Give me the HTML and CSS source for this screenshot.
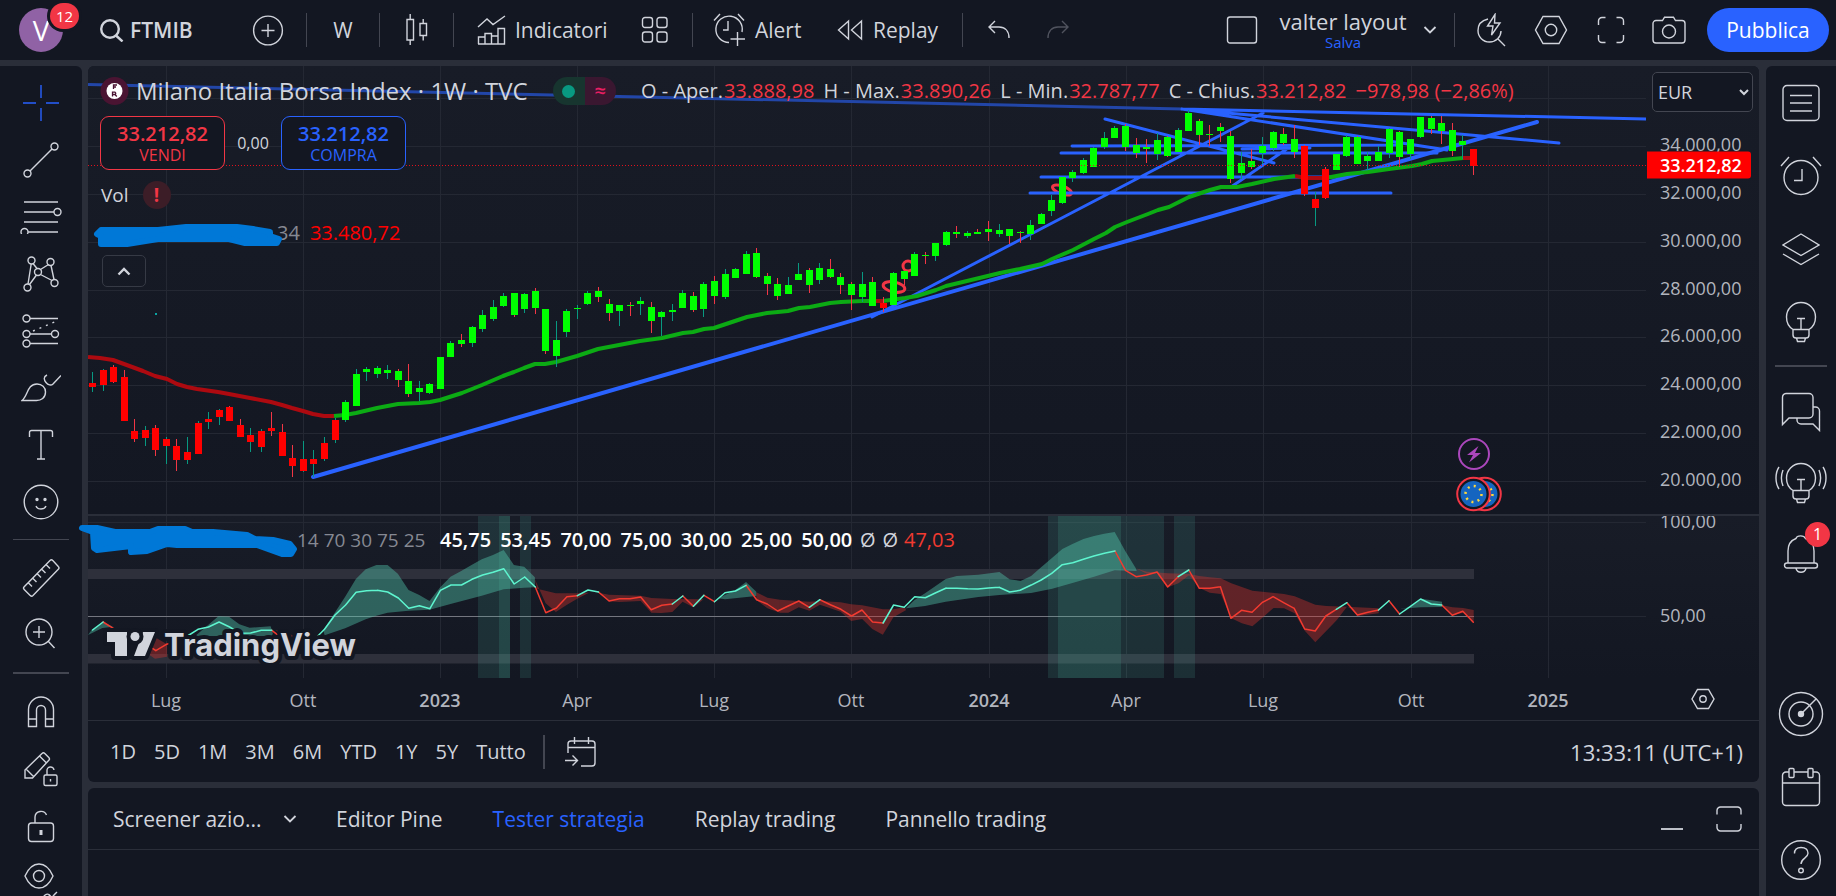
FILE: index.html
```html
<!DOCTYPE html>
<html lang="it">
<head>
<meta charset="utf-8">
<meta name="viewport" content="width=device-width, initial-scale=1">
<title>FTMIB 33.212,82 — valter layout</title>
<link rel="stylesheet" href="styles.css">
</head>
<body>
<header class="topbar">
  <button class="avatar-btn" aria-label="Menu utente"><span class="avatar">V</span><span class="badge badge-user">12</span></button>
  <button class="symbol-btn"><svg width="24" height="24" viewBox="0 0 24 24" class="ic heavy"><circle cx="10" cy="11" r="8.800"/><path d="M16 17.500l6.500 6"/></svg><b>FTMIB</b></button>
  <button class="tb plus-btn" aria-label="Confronta"><svg width="32" height="32" viewBox="0 0 32 32" class="ic"><circle cx="16" cy="16.500" r="14.400"/><path d="M16 10v13M9.500 16.500h13"/></svg></button>
  <i class="vsep"></i>
  <button class="tb w-btn">W</button>
  <i class="vsep"></i>
  <button class="tb candle-btn" aria-label="Candele"><svg width="24" height="32" viewBox="0 0 24 32" class="ic"><path d="M2 5.500h6.500v20.500H2zM5.200 0v5.500M5.200 26v5M15 9.500h6.500v12H15zM18.200 5v4.500M18.200 21.500v5"/></svg></button>
  <i class="vsep"></i>
  <button class="tb ind-btn"><svg width="29" height="30" viewBox="0 0 29 30" class="ic"><path d="M1 12l9-8 6 5.500L28 1M1.500 29v-7h6.500v7M8 29V18.500h6.500V29M14.500 29v-8h6.500v8M21 29V13.500h6.500V29zM1 29h27"/></svg>Indicatori</button>
  <button class="tb grid-btn" aria-label="Modelli"><svg width="28" height="28" viewBox="0 0 28 28" class="ic"><rect x="1.500" y="1.500" width="10" height="10" rx="2.500"/><rect x="16" y="1.500" width="10" height="10" rx="2.500"/><rect x="1.500" y="16" width="10" height="10" rx="2.500"/><rect x="16" y="16" width="10" height="10" rx="2.500"/></svg></button>
  <i class="vsep"></i>
  <button class="tb alert-btn"><svg width="32" height="34" viewBox="0 0 32 34" class="ic"><path d="M1 7.500L7 1M25 1l6 6.500M15 8v9h-5M16 29.500A13.200 13.200 0 1 1 29 19M24.500 19v14M17.500 26H32"/></svg>Alert</button>
  <button class="tb replay-btn"><svg width="26" height="22" viewBox="0 0 26 22" class="ic"><path d="M11.500 2v18L1.500 11zM24.500 2v18l-10-9z"/></svg>Replay</button>
  <i class="vsep"></i>
  <button class="tb undo-btn" aria-label="Annulla"><svg width="24" height="20" viewBox="0 0 24 20" class="ic"><path d="M8 1L2 7l6 6M2 7h10c6 0 10 4 10 11"/></svg></button>
  <button class="tb redo-btn" aria-label="Ripeti"><svg width="24" height="20" viewBox="0 0 24 20" class="ic"><path d="M16 1l6 6-6 6M22 7H12C6 7 2 11 2 18"/></svg></button>
  <span class="spacer"></span>
  <button class="tb square-btn" aria-label="Configura layout"><svg width="32" height="30" viewBox="0 0 32 30" class="ic"><rect x="1.500" y="2" width="29" height="26" rx="2.500"/></svg></button>
  <button class="layout-btn"><span>valter layout</span><small>Salva</small></button>
  <button class="tb chev-btn" aria-label="Gestisci layout"><svg width="14" height="8" viewBox="0 0 14 8" class="ic thick"><path d="M1.500 1L7 6.500 12.500 1"/></svg></button>
  <i class="vsep"></i>
  <button class="tb quick-btn" aria-label="Ricerca rapida"><svg width="30" height="34" viewBox="0 0 30 34" class="ic"><path d="M12 6C5.500 7.500 2 12 2 17.500 2 24 7 29 13.500 29S25 24 25 18M22 26l7 7M19 1.500L11.500 13H17l-1.500 9L24 10h-5.500z"/></svg></button>
  <button class="tb set-btn" aria-label="Impostazioni"><svg width="34" height="30" viewBox="0 0 34 30" class="ic"><path d="M9 1.500h16L32.500 15 25 28.500H9L1.500 15z"/><circle cx="17" cy="15" r="5.700"/></svg></button>
  <button class="tb full-btn" aria-label="Schermo intero"><svg width="28" height="28" viewBox="0 0 28 28" class="ic"><path d="M1.500 9V5a3.500 3.500 0 0 1 3.500-3.500h3.500M19.500 1.500H23A3.500 3.500 0 0 1 26.500 5v4M26.500 19v4a3.500 3.500 0 0 1-3.500 3.500h-3.500M8.500 26.500H5A3.500 3.500 0 0 1 1.500 23v-4"/></svg></button>
  <button class="tb cam-btn" aria-label="Istantanea"><svg width="34" height="28" viewBox="0 0 34 28" class="ic"><path d="M4 4.500h6.500l2-3.300h9l2 3.300H30a3 3 0 0 1 3 3V24a3 3 0 0 1-3 3H4a3 3 0 0 1-3-3V7.500a3 3 0 0 1 3-3z"/><circle cx="17" cy="15.500" r="6.500"/></svg></button>
  <button class="publish">Pubblica</button>
</header>

<main class="workspace">
  <nav class="left-tools" aria-label="Strumenti di disegno">
    <button class="lt active" aria-label="Croce"><svg width="38" height="38" viewBox="0 0 38 38" class="ic"><path d="M19 1v13M19 24v13M1 19h13M24 19h13"/></svg></button>
    <button class="lt" aria-label="Linea di tendenza"><svg width="36" height="36" viewBox="0 0 36 36" class="ic"><circle cx="4.500" cy="31.500" r="3.500"/><circle cx="31.500" cy="4.500" r="3.500"/><path d="M7 29L29 7"/></svg></button>
    <button class="lt" aria-label="Fibonacci"><svg width="42" height="34" viewBox="0 0 42 34" class="ic"><path d="M4 2h34M4 12h30M4 22h34M8 32h30"/><circle cx="37.500" cy="12" r="3.500"/><circle cx="4.500" cy="32" r="3.500"/></svg></button>
    <button class="lt" aria-label="Pattern XABCD"><svg width="36" height="36" viewBox="0 0 36 36" class="ic"><circle cx="8.500" cy="4.500" r="3.500"/><circle cx="27.500" cy="6" r="3.500"/><circle cx="15" cy="16" r="3.500"/><circle cx="4.500" cy="31.500" r="3.500"/><circle cx="31.500" cy="27" r="3.500"/><path d="M8.200 8L5 28M10 7.500l4 5M6.500 28.500l7-9.500M17.500 13.500l8-5M28 9.500l3 14M17.500 18.500l11.500 6"/></svg></button>
    <button class="lt" aria-label="Previsione"><svg width="38" height="34" viewBox="0 0 38 34" class="ic"><circle cx="4.500" cy="4.500" r="3.500"/><circle cx="4.500" cy="20" r="3.500"/><circle cx="33" cy="20" r="3.500"/><circle cx="4.500" cy="29.500" r="3.500"/><path d="M8 4.500h28M8 20h21.500M8 29.500h28"/><path d="M11 17L35 7" stroke-dasharray="2 5"/></svg></button>
    <button class="lt" aria-label="Pennello"><svg width="40" height="28" viewBox="0 0 40 28" class="ic"><path d="M1 26.500C7 22 6 10 16 10c5 0 8.500 3.500 8.500 8 0 6-4.500 8.500-9 8.500zM26 1c-4 2-3 5-1 7.500s5 3.500 7 1.500l8-8.500"/></svg></button>
    <button class="lt" aria-label="Testo"><svg width="26" height="32" viewBox="0 0 26 32" class="ic"><path d="M1.500 8V3.500a2 2 0 0 1 2-2h19a2 2 0 0 1 2 2V8M13 1.500V30M9 30h8"/></svg></button>
    <button class="lt" aria-label="Emoji"><svg width="36" height="36" viewBox="0 0 36 36" class="ic"><circle cx="18" cy="18" r="16.800"/><path d="M13 22c1.500 4 8.500 4 10 0"/><circle cx="14" cy="15.500" r="1" class="dot"/><circle cx="22" cy="15.500" r="1" class="dot"/></svg></button>
    <i class="hsep"></i>
    <button class="lt mid" aria-label="Misura"><svg width="38" height="40" viewBox="0 0 38 40" class="ic"><path d="M28 2.500a2 2 0 0 1 2.800 0l5.500 6a2 2 0 0 1 0 2.800L11 37.500a2 2 0 0 1-2.800 0l-6-6a2 2 0 0 1 0-2.800zM24 6.500l4 4M19.500 11l4 4M15 15.500l4 4M10.500 20l4 4M6 24.500l4 4"/></svg></button>
    <button class="lt mid" aria-label="Zoom"><svg width="32" height="32" viewBox="0 0 32 32" class="ic"><circle cx="14" cy="15" r="13"/><path d="M23 24l6.500 7M14 9v12M8 15h12"/></svg></button>
    <i class="hsep wide"></i>
    <button class="lt" aria-label="Calamita"><svg width="28" height="32" viewBox="0 0 28 32" class="ic"><path d="M1.500 30.500V13.500a12.500 12.500 0 0 1 25 0v17h-8V14a4.500 4.500 0 0 0-9 0v16.500zM1.500 23h8M18.500 23h8"/></svg></button>
    <button class="lt" aria-label="Resta in modalità disegno"><svg width="36" height="36" viewBox="0 0 36 36" class="ic"><path d="M2 27v-8L19 2.500a2 2 0 0 1 2.800 0l4 4a2 2 0 0 1 0 2.800L9.500 27zM3 18l8 8M16.500 5l7 7"/><rect x="21" y="24" width="13" height="10.500" rx="1.500"/><path d="M24 24v-4a3.500 3.500 0 0 1 7-1M27.500 28v2.500"/></svg></button>
    <button class="lt" aria-label="Blocca disegni"><svg width="28" height="34" viewBox="0 0 28 34" class="ic"><rect x="1.500" y="14" width="25" height="18.500" rx="3"/><path d="M8 14V8a6 6 0 0 1 11.500-2"/><path d="M14 21v5" stroke-width="3"/></svg></button>
    <button class="lt" aria-label="Nascondi disegni"><svg width="36" height="42" viewBox="0 0 36 42" class="ic"><path d="M2 14C6 5 11 2 16 2s10 3 14 12c-4 9-9 12-14 12S6 23 2 14z"/><circle cx="16" cy="14" r="5.500"/><path d="M20 38c0-6 6-8 8-3M26 33c1 3 4 2 5 0l3-3"/></svg></button>
  </nav>

  <div class="center">
    <section class="chart-card" aria-label="Grafico FTMIB">
      <div class="chart">
        <div class="plot">
          <svg id="plot" class="plot-svg" viewBox="88 66 1558 612" preserveAspectRatio="none" aria-hidden="true">
            <defs>
              <linearGradient id="bg" x1="0" y1="0" x2="0" y2="1"><stop offset="0" stop-color="#181c27"/><stop offset="1" stop-color="#131722"/></linearGradient>
            </defs>
            <rect x="88" y="66" width="1558" height="449" fill="url(#bg)"/>
            <rect x="88" y="515" width="1558" height="163" fill="url(#bg)"/>
            <g id="grid"></g>
            <g class="marks">
              <ellipse cx="894" cy="287" rx="11" ry="5" transform="rotate(12 894 287)"/>
              <ellipse cx="908" cy="266" rx="5" ry="5"/>
              <ellipse cx="1062" cy="190" rx="10" ry="4" transform="rotate(20 1062 190)"/>
            </g>
            <g class="trend">
              <path class="dim" d="M88 84.500L1182 109"/>
              <path d="M1182 109L1646 119M872 317L1263 113M1105 119L1274 163M1182 109L1559 143M1182 109L1447 150M1072 146L1400 145M1061 153H1437M1041 177H1338M1030 193H1391M1242 149L1310 148M1231 187L1291 146"/>
              <path class="main" d="M313 477L1537 122"/>
            </g>
            <g class="ma">
              <path class="dn" d="M88 357L100 358 113 360 124 364 143 371 155 376 167 379 177 384 187 387 197 389 218 392 229 394 250 398 271 402 282 405 292 408 303 411 313 414 324 416 334 416M872 301H883M1295 176L1306 178H1326M1463 158H1474"/>
              <path class="up" d="M334 416L345 415 356 413 377 408 398 404 419 403 430 402 440 400 462 393 482 385 503 376 514 372 524 368 535 364 545 364 556 362 577 356 598 349 619 345 640 341 662 338 683 333 693 332 704 329 714 328 735 321 747 317 767 313 778 312 788 311 799 308 810 307 830 303 841 302 862 301 872 301M883 301L905 298 917 296 936 290 946 286 967 281 1000 273 1020 269 1042 264 1052 259 1073 250 1094 239 1106 233 1115 227 1127 222 1148 214 1158 210 1169 207 1189 197 1210 190 1221 187 1237 187 1252 184 1274 179 1295 176M1326 178L1347 174 1368 172 1389 169 1412 166 1422 164 1432 161 1453 159 1463 158"/>
            </g>
            <g id="candles" shape-rendering="crispEdges"></g>
            <path class="last" d="M88 165.500H1646"/>
            <g class="zones">
              <path class="band" d="M88 569h1386v10H88zM88 654h1386v9.500H88z"/>
              <path class="mid-line" d="M88 616.500H1474"/>
              <path class="col" d="M478 516h21v162h-21zM520 516h11v162h-11zM1048 516h10v162h-10zM1121 516h43v162h-43zM1174 516h21v162h-21z"/>
              <path class="col strong" d="M499 516h11v162h-11zM1058 516h63v162h-63z"/>
            </g>
            <g transform="translate(80 500) scale(.4464 .3333)">
              <path class="fill-up" d="M18 405L27 388 50 366 74 380 50 384zM258 408L287 375 310 349 334 350 357 373 380 383 427 379 432 400 430 408zM545 390L570 340 594 290 618 237 640 208 664 195H689L712 221 736 270 760 285 783 303 807 262 830 230 854 213 877 195 900 178 925 165 949 150 972 195 995 200 1019 232V262L995 263 949 268 900 287 830 312 783 329 736 332 689 338 664 347 640 358 594 385 548 406zM1430 295L1468 270 1492 246 1515 275V288L1445 298z"/>
              <path class="fill-dn" d="M74 384L98 388 121 410 168 412 195 433V470L168 476 145 455zM438 390L475 405 505 440 490 450zM1019 238L1024 266 1066 280H1113L1140 278 1113 297 1090 315 1066 336 1043 310zM1161 278L1185 284 1256 287 1280 294 1327 297 1397 298 1374 322 1350 305 1327 336 1303 339 1280 338 1256 303 1208 306 1185 304zM1515 277L1540 293 1568 299V338L1540 325 1515 300z"/>
            </g>
            <g transform="translate(780 500) scale(.4591 .3333)">
              <path class="fill-up" d="M270 330L293 300 316 280 361 237 385 228 432 224 478 216 500 238 524 243 547 228 570 200 593 173 615 147 637 132 661 117 684 108 706 101 729 96 752 153 775 205 777 213 729 211 684 230 637 249 593 266 547 279 478 285 432 291 361 305 316 318 275 325zM1350 326L1373 322 1396 296 1442 305V321L1396 322z"/>
              <path class="fill-dn" d="M0 299L64 305 87 303 132 307 155 313 179 316 224 328H247L270 322 275 330 247 352 224 404 201 387 179 357 155 363 132 335 87 314 64 332 41 322 18 338H0zM775 205L799 215 845 220 891 222 913 228 936 232 960 235 983 250 1029 272 1098 282 1121 289 1166 314 1190 318 1235 320 1213 360 1166 427 1143 392 1121 340 1098 325 1075 324 1052 352 1029 379 1006 370 983 355 960 282 936 278 913 263 891 226 868 250 845 262 821 220 799 221zM1235 320L1304 325V340L1258 348 1243 325zM1442 316L1465 322 1488 324 1511 330V367L1488 338 1465 346z"/>
            </g>
            <g id="rsi"></g>
            <path d="M155 314h2" stroke="#0aa3a3" stroke-width="2"/>
          </svg>

          <div class="legend">
            <div class="legend-row title-row">
              <svg width="29" height="28" viewBox="0 0 29 28"><circle cx="14.500" cy="14" r="14" fill="#4a1432"/><circle cx="14.500" cy="14" r="8" fill="#fff"/><path d="M17 8h-3.500v4M13.500 10H16M12.500 19.500v-4.300h2.500q1.500 1.200 0 2.300h-2.500M15 17.500l1.800 2" fill="none" stroke="#4a1432" stroke-width="1.300"/></svg>
              <h1>Milano Italia Borsa Index · 1W · TVC</h1>
              <span class="status"><i class="open"></i><i class="approx">≈</i></span>
              <dl class="ohlc">
                <div><dt>O - Aper.</dt><dd>33.888,98</dd></div>
                <div><dt>H - Max.</dt><dd>33.890,26</dd></div>
                <div><dt>L - Min.</dt><dd>32.787,77</dd></div>
                <div><dt>C - Chius.</dt><dd>33.212,82</dd></div>
              </dl>
              <span class="change">−978,98 (−2,86%)</span>
            </div>
            <div class="legend-row trade-row">
              <button class="trade sell"><b>33.212,82</b><span>VENDI</span></button>
              <span class="spread">0,00</span>
              <button class="trade buy"><b>33.212,82</b><span>COMPRA</span></button>
            </div>
            <div class="legend-row vol-row"><span>Vol</span><i class="warn">!</i></div>
            <div class="legend-row ma-row"><span class="arg">34</span><span class="val">33.480,72</span></div>
            <button class="collapse" aria-label="Comprimi legenda"><svg width="14" height="9" viewBox="0 0 14 9" class="ic heavy"><path d="M1.500 7.500L7 2l5.500 5.500"/></svg></button>
          </div>

          <div class="legend-rsi"><span class="args">14 70 30 75 25</span><span class="vals"><span>45,75</span><span>53,45</span><span>70,00</span><span>75,00</span><span>30,00</span><span>25,00</span><span>50,00</span></span><span class="nil"><span>Ø</span><span>Ø</span></span><span class="cur">47,03</span></div>

          <svg class="tv-logo" width="270" height="50" viewBox="0 0 270 50" role="img" aria-label="TradingView">
            <g class="halo"><path d="M5 10h20v24H13V20H5zM41 10h12L43 34H32z"/><circle cx="33" cy="14.500" r="4.500"/><text x="62" y="34">TradingView</text></g>
          </svg>

          <svg class="scribbles" width="230" height="345" viewBox="74 220 230 345" aria-hidden="true">
            <path d="M97 234L101 230 158 230 186 227H237L253 229 270 232 270 236 279 239 277 243 245 243 229 239 158 239 127 244 101 244 101 236z"/>
            <path d="M82 528L97 528 115 532H150L158 529H185L192 532H213L247 535 255 539 273 540 290 544 294 549 291 554 282 554 257 545H177L167 544 147 551 131 552 131 546 97 550 94 548 93 532z"/>
          </svg>

          <button class="event flash" aria-label="Ultime notizie"><svg width="32" height="32" viewBox="0 0 32 32"><circle cx="16" cy="16" r="15" fill="#131722" stroke="#ab47bc" stroke-width="2"/><path d="M20.500 8L9 17h6l-4 7.500L23 15h-6z" fill="#ab47bc"/></svg></button>
          <button class="event eu" aria-label="Eventi economici"><svg width="47" height="36" viewBox="0 0 47 36"><circle cx="29" cy="18" r="16.300" fill="#131722" stroke="#f23645" stroke-width="2"/><circle cx="29" cy="18" r="13" fill="#1565c0"/><circle cx="29" cy="18" r="8" fill="none" stroke="#ffd83b" stroke-width="2.500" stroke-dasharray="2 4.280"/><circle cx="18" cy="18" r="16.300" fill="#131722" stroke="#f23645" stroke-width="2"/><circle cx="18" cy="18" r="13" fill="#1565c0"/><circle cx="18" cy="18" r="8" fill="none" stroke="#ffd83b" stroke-width="2.500" stroke-dasharray="2 4.280"/></svg></button>
        </div>

        <div class="axis">
          <div class="axis-pane" id="axis-price">
            <select class="currency" aria-label="Valuta"><option>EUR</option></select>
          </div>
          <div class="axis-pane second" id="axis-rsi"></div>
        </div>

        <div class="time-axis" id="time-axis"></div>
        <button class="time-set" aria-label="Impostazioni scala"><svg width="24" height="22" viewBox="0 0 24 22" class="ic"><path d="M6.500 1.500h11L23 11l-5.500 9.500h-11L1 11z"/><circle cx="12" cy="11" r="3.200"/></svg></button>
      </div>

      <div class="ranges">
        <button>1D</button><button>5D</button><button>1M</button><button>3M</button><button>6M</button><button>YTD</button><button>1Y</button><button>5Y</button><button>Tutto</button>
        <i class="vsep tall"></i>
        <button class="goto" aria-label="Vai a"><svg width="31" height="30" viewBox="0 0 31 30" class="ic"><path d="M3 16V7a3 3 0 0 1 3-3h21a3 3 0 0 1 3 3v19a3 3 0 0 1-3 3H16M3 10.500h27M9.500 0v7M23.500 0v7M0 23.500h12M7.500 18.500l5 5-5 5"/></svg></button>
        <span class="spacer"></span>
        <button class="clock">13:33:11 (UTC+1)</button>
      </div>
    </section>

    <section class="bottom-card" aria-label="Pannello inferiore">
      <div class="tabs">
        <button class="t-screener">Screener azio...</button>
        <button class="t-chev" aria-label="Altri screener"><svg width="14" height="8" viewBox="0 0 14 8" class="ic thick"><path d="M1.500 1L7 6.500 12.500 1"/></svg></button>
        <button>Editor Pine</button>
        <button class="on">Tester strategia</button>
        <button>Replay trading</button>
        <button>Pannello trading</button>
        <span class="spacer"></span>
        <button class="t-ctl" aria-label="Riduci"><svg width="22" height="26" viewBox="0 0 22 26" class="ic thick"><path d="M0 23h22"/></svg></button>
        <button class="t-ctl last-ctl" aria-label="Ingrandisci"><svg width="26" height="26" viewBox="0 0 26 26" class="ic"><path d="M1 8.500V4.500a3.500 3.500 0 0 1 3.500-3.500h17A3.500 3.500 0 0 1 25 4.500v4M1 18v3.500A3.500 3.500 0 0 0 4.500 25h17a3.500 3.500 0 0 0 3.500-3.500V18"/></svg></button>
      </div>
    </section>
  </div>

  <nav class="right-tools" aria-label="Widget">
    <button class="rt" aria-label="Watchlist"><svg width="38" height="38" viewBox="0 0 38 38" class="ic"><rect x="1" y="1.500" width="36" height="35" rx="4"/><path d="M8 11.500h22M8 19h22M8 27h22"/></svg></button>
    <button class="rt" aria-label="Alert"><svg width="42" height="40" viewBox="0 0 42 40" class="ic"><circle cx="21" cy="21.500" r="17"/><path d="M22 13v11.500h-8M1 10l8-9M33 1l8 9"/></svg></button>
    <button class="rt" aria-label="Finestra dati"><svg width="38" height="34" viewBox="0 0 38 34" class="ic"><path d="M19 2l18 11-18 10.500L1 13zM1 22l18 10.500L37 22"/></svg></button>
    <button class="rt" aria-label="Idee"><svg width="32" height="42" viewBox="0 0 32 42" class="ic"><use href="#bulb"/></svg></button>
    <i class="hsep"></i>
    <button class="rt short" aria-label="Chat"><svg width="40" height="40" viewBox="0 0 40 40" class="ic"><path d="M5 1.500h23a4 4 0 0 1 4 4V22a4 4 0 0 1-4 4H8l-6.500 6.500V5.500A4 4 0 0 1 5 1.500zM32 15h2.500a4 4 0 0 1 4 4v19.500L32 32H20a4 4 0 0 1-4-4v-2"/></svg></button>
    <button class="rt short" aria-label="Streaming di idee"><svg width="52" height="42" viewBox="0 0 52 42" class="ic"><g transform="translate(10 0)"><g id="bulb"><path d="M8 28.500C4 26 1.500 21.500 1.500 16a14.500 14.500 0 0 1 29 0c0 5.500-2.500 10-6.500 12.500zM8 28.500V34a3 3 0 0 0 3 3h10a3 3 0 0 0 3-3v-5.500M11.500 37l1 3.500h7l1-3.500M16 28.500V17.500M12 17.500h8"/></g></g><path d="M8 8c-2 5-2 11 0 16M4 5c-4 6-4 16 0 22M44 8c2 5 2 11 0 16M48 5c4 6 4 16 0 22"/></svg></button>
    <button class="rt short bell" aria-label="Notifiche"><svg width="36" height="40" viewBox="0 0 36 40" class="ic"><path d="M5 29V17C5 10 9 6 13 4.500 14 1 21 1 22.500 4.500 27 6 31 10 31 17v12M4 29h28a2.500 2.500 0 0 1 0 5H4a2.500 2.500 0 0 1 0-5zM13 34.500c1.500 5 8.500 5 10 0"/></svg><span class="badge badge-bell">1</span></button>
    <span class="spacer"></span>
    <button class="rt" aria-label="Screener"><svg width="46" height="46" viewBox="0 0 46 46" class="ic"><circle cx="23" cy="23" r="21.500"/><circle cx="23" cy="23" r="12"/><circle cx="23" cy="23" r="2.500" class="dot"/><path d="M23 23L38 8"/></svg></button>
    <button class="rt" aria-label="Calendario"><svg width="40" height="40" viewBox="0 0 40 40" class="ic"><path d="M8 5H5a3.500 3.500 0 0 0-3.500 3.500V35A3.500 3.500 0 0 0 5 38.500h30a3.500 3.500 0 0 0 3.500-3.500V8.500A3.500 3.500 0 0 0 35 5h-3M13 5h14M1.500 16h37"/><rect x="8" y="1.500" width="5" height="9" rx="1"/><rect x="27" y="1.500" width="5" height="9" rx="1"/></svg></button>
    <button class="rt" aria-label="Aiuto"><svg width="42" height="42" viewBox="0 0 42 42" class="ic"><circle cx="21" cy="21" r="19.300"/><path d="M14.500 14.500C14.500 10.500 17 8.500 21 8.500s7 2 7 5.800c0 5-7 4.700-7 10.700"/><circle cx="21" cy="31.500" r="2.300"/></svg></button>
  </nav>
</main>
<script src="chart.js"></script>
</body>
</html>
```

FILE: styles.css
```css
:root {
  --bg: #131722;
  --line: #2a2e39;
  --sep: #434651;
  --text: #d1d4dc;
  --muted: #b2b5be;
  --blue: #2962ff;
  --red: #f23645;
}

* { box-sizing: border-box; }

body {
  margin: 0;
  height: 100vh;
  display: flex;
  flex-direction: column;
  gap: 6px;
  overflow: hidden;
  background: var(--line);
  color: var(--text);
  font-family: "Open Sans", "Noto Sans", sans-serif;
  font-size: 20px;
  line-height: 24px;
}

button {
  flex: none;
  margin: 0;
  padding: 0;
  border: 0;
  background: none;
  color: inherit;
  font: inherit;
  white-space: nowrap;
  cursor: pointer;
}

svg { display: block; flex: none; }
i { font-style: normal; }

.ic { fill: none; stroke: currentColor; stroke-width: 1.4; }
.ic.thick { stroke-width: 1.8; }
.ic.heavy { stroke-width: 2.4; }
.ic .dot { fill: currentColor; }
.spacer { flex: 1; }

/* Top bar */
.topbar {
  flex: none;
  height: 60px;
  display: flex;
  align-items: center;
  background: var(--bg);
  font-size: 21px;
}
.tb {
  height: 60px;
  display: flex;
  align-items: center;
  justify-content: center;
}
.vsep { flex: none; width: 1px; height: 34px; background: var(--sep); }
.vsep.tall { width: 2px; }
.avatar-btn { position: relative; width: 100px; height: 60px; padding-left: 19px; }
.avatar {
  display: flex;
  align-items: center;
  justify-content: center;
  width: 44px;
  height: 44px;
  border-radius: 50%;
  background: #9062a5;
  color: #fff;
  font-size: 28px;
}
.badge {
  position: absolute;
  border-radius: 14px;
  background: var(--red);
  color: #fff;
  text-align: center;
}
.badge-user { left: 50px; top: 3px; width: 29px; height: 26px; font-size: 15px; line-height: 26px; box-shadow: 0 0 0 3px var(--bg); }
.symbol-btn { width: 130px; display: flex; align-items: center; gap: 6px; }
.symbol-btn b { font-weight: 600; }
.plus-btn { width: 76px; }
.w-btn { width: 72px; }
.candle-btn { width: 73px; }
.ind-btn { width: 164px; justify-content: flex-start; gap: 9px; padding-left: 23px; }
.grid-btn { width: 74px; }
.alert-btn { width: 127px; justify-content: flex-start; gap: 10px; padding-left: 20px; }
.replay-btn { width: 142px; justify-content: flex-start; gap: 10px; padding-left: 17px; }
.undo-btn { width: 71px; }
.redo-btn { width: 48px; color: #50535e; }
.square-btn { width: 48px; }
.layout-btn { width: 154px; display: flex; flex-direction: column; align-items: center; font-size: 22px; }
.layout-btn small { color: var(--blue); font-size: 15px; line-height: 18px; }
.chev-btn { width: 20px; margin-right: 14px; }
.quick-btn { width: 72px; }
.set-btn { width: 48px; }
.full-btn { width: 72px; }
.cam-btn { width: 44px; }
.publish {
  width: 122px;
  height: 44px;
  margin: 0 7px 0 16px;
  border-radius: 22px;
  background: var(--blue);
  color: #fff;
  font-weight: 500;
}

/* Workspace */
.workspace { flex: 1; min-height: 0; display: flex; gap: 6px; }
.left-tools, .right-tools {
  flex: none;
  display: flex;
  flex-direction: column;
  align-items: center;
  overflow: hidden;
  background: var(--bg);
}
.left-tools { width: 82px; padding-top: 8px; border-radius: 0 6px 0 0; }
.right-tools { width: 70px; margin-left: 1px; border-radius: 6px 0 0 0; }
.lt, .rt { width: 100%; display: flex; align-items: center; justify-content: center; }
.lt { height: 57px; }
.lt.mid { height: 55px; }
.lt.active { color: var(--blue); }
.rt { height: 73px; }
.rt.short { height: 71px; }
.hsep { flex: none; width: 56px; height: 1px; margin: 9px 0 10px; background: var(--sep); }
.hsep.wide { height: 2px; margin: 12px 0 9px; }
.right-tools .hsep { width: 52px; height: 2px; margin: 7px 0 9px; }
.bell { position: relative; }
.badge-bell { left: 39px; top: 4px; width: 25px; height: 25px; font-size: 16px; line-height: 25px; }

.center { flex: 1; min-width: 0; display: flex; flex-direction: column; gap: 6px; }
.chart-card {
  flex: 1;
  min-height: 0;
  display: flex;
  flex-direction: column;
  border-radius: 6px;
  background: var(--bg);
}
.chart {
  flex: 1;
  min-height: 0;
  display: grid;
  grid-template-columns: minmax(0, 1fr) 113px;
  grid-template-rows: minmax(0, 1fr) 43px;
}
.plot { position: relative; min-height: 0; }
.plot-svg { position: absolute; width: 100%; height: 100%; border-radius: 6px 0 0 0; }

.grid-line { stroke: #242833; stroke-width: 1; fill: none; }
.trend path { fill: none; stroke: #2962ff; stroke-width: 3; stroke-linecap: round; }
.trend .dim { stroke: #2246a8; stroke-linecap: butt; }
.trend .main { stroke-width: 4; }
.marks ellipse { fill: none; stroke: #f23645; stroke-width: 3; }
.ma path { fill: none; stroke-width: 4; stroke-linejoin: round; }
.ma .up { stroke: #0cab14; }
.ma .dn { stroke: #ad0a10; }
.last { stroke: #e0101c; stroke-width: 1; stroke-dasharray: 1 2; }
.band { fill: #2e303b; }
.mid-line { stroke: #74767f; stroke-width: 1; }
.col { fill: rgba(78, 190, 165, 0.15); }
.col.strong { fill: rgba(78, 190, 165, 0.28); }
.fill-up { fill: rgba(84, 200, 175, 0.42); }
.fill-dn { fill: rgba(210, 50, 45, 0.4); }
.rsi-up, .rsi-dn { fill: none; stroke-width: 1.5; stroke-linecap: round; }
.rsi-up { stroke: #5ef5cf; }
.rsi-dn { stroke: #f23a30; }

/* Overlays on the plot */
.legend { position: absolute; left: 12px; top: 10px; right: 0; display: flex; flex-direction: column; align-items: flex-start; }
.legend-row { display: flex; align-items: center; white-space: nowrap; }
.title-row { height: 30px; }
.title-row h1 { width: 417px; margin: 0 0 0 7px; font-size: 24px; font-weight: 400; }
.status { display: flex; width: 63px; height: 28px; }
.status i { flex: 1; display: flex; align-items: center; justify-content: center; }
.status .open { border-radius: 14px 0 0 14px; background: #17352f; }
.status .open::before { content: ""; width: 13px; height: 13px; border-radius: 50%; background: #089981; }
.status .approx { border-radius: 0 14px 14px 0; background: #3a1730; color: #e91e63; font-weight: 600; }
.ohlc { display: flex; gap: 9px; margin: 0 9px 0 25px; }
.ohlc div { display: flex; gap: 1px; }
.ohlc dd { margin: 0; color: var(--red); }
.change { color: var(--red); }
.trade-row { height: 54px; margin-top: 10px; }
.trade {
  width: 125px;
  height: 54px;
  display: flex;
  flex-direction: column;
  align-items: center;
  justify-content: center;
  border: 1px solid;
  border-radius: 9px;
  background: var(--bg);
  font-size: 16px;
  line-height: 20px;
}
.trade b { font-size: 20px; font-weight: 600; line-height: 23px; }
.sell { color: var(--red); }
.buy { color: var(--blue); }
.spread { width: 56px; text-align: center; font-size: 16px; }
.vol-row { height: 28px; margin-top: 11px; padding-left: 1px; gap: 14px; font-size: 19px; }
.warn { width: 28px; height: 28px; border-radius: 50%; background: #3c1d27; color: var(--red); text-align: center; font-weight: 700; line-height: 28px; }
.ma-row { height: 28px; margin-top: 10px; padding-left: 177px; gap: 10px; }
.arg, .args { color: #868993; }
.val { color: #f00; }
.collapse {
  width: 44px;
  height: 32px;
  margin: 8px 0 0 2px;
  display: flex;
  align-items: center;
  justify-content: center;
  border: 1px solid #363a45;
  border-radius: 5px;
}
.legend-rsi { position: absolute; left: 209px; top: 77.450%; transform: translateY(-50%); display: flex; white-space: nowrap; }
.legend-rsi .args { width: 143px; font-size: 19px; }
.legend-rsi .vals { width: 420px; display: flex; gap: 9px; color: #fff; font-weight: 600; }
.legend-rsi .nil { width: 44px; display: flex; gap: 7px; }
.legend-rsi .cur { color: #f23a30; }
.tv-logo { position: absolute; left: 14px; bottom: 6px; }
.halo { fill: #d1d4dc; stroke: #131722; stroke-width: 8; stroke-linejoin: round; paint-order: stroke; font: 700 31px Inter, sans-serif; }
.scribbles { position: absolute; left: -14px; top: 154px; z-index: 2; fill: #0078d7; stroke: #0078d7; stroke-width: 6; stroke-linejoin: round; }
.event { position: absolute; transform: translate(-50%, -50%); }
.flash { left: 88.970%; top: 63.400%; }
.eu { left: 89.280%; top: 69.930%; }

/* Axes */
.axis { display: grid; grid-template-rows: 448fr 164fr; min-height: 0; color: var(--muted); font-size: 18px; }
.axis-pane { position: relative; overflow: hidden; background: linear-gradient(#181c27, #131722); border-radius: 0 6px 0 0; }
.axis-pane.second { border-top: 2px solid var(--line); border-radius: 0; }
.plot::after { content: ""; position: absolute; left: 0; right: 0; top: 73.200%; height: 2px; background: var(--line); }
.tick { position: absolute; left: 14px; transform: translateY(-50%); line-height: 20px; }
.tick.now { left: 1px; width: 104px; height: 27px; padding-left: 13px; border-radius: 0 3px 3px 0; background: #f00; color: #fff; font-weight: 600; line-height: 26px; }
.currency {
  position: absolute;
  left: 6px;
  top: 6px;
  width: 101px;
  height: 40px;
  padding: 0 5px 0 1px;
  border: 1px solid var(--sep);
  border-radius: 5px;
  background: var(--bg);
  color: var(--text);
  font: 400 18px "Open Sans", sans-serif;
}
.time-axis { position: relative; border-bottom: 1px solid var(--line); color: var(--muted); font-size: 18px; }
.time-axis span { position: absolute; top: 10px; transform: translateX(-50%); }
.time-axis .year { font-weight: 600; }
.time-set { display: flex; align-items: center; border-bottom: 1px solid var(--line); padding: 0 0 0 45px; color: var(--text); }

.ranges { flex: none; height: 61px; display: flex; align-items: center; padding: 0 16px 0 22px; }
.ranges button { margin-right: 18px; }
.ranges .vsep { margin: 0 20px 0 -1px; }
.ranges .goto, .ranges .clock { margin-right: 0; }
.ranges .clock { font-size: 22px; }

/* Bottom panel */
.bottom-card { flex: none; height: 108px; border-radius: 6px 6px 0 0; background: var(--bg); }
.tabs { height: 62px; display: flex; align-items: center; padding: 0 17px 0 25px; border-bottom: 1px solid var(--line); font-size: 21px; }
.tabs button { margin-right: 50px; }
.tabs .t-screener { width: 150px; margin-right: 20px; text-align: left; }
.tabs .t-chev { margin-right: 39px; }
.tabs .on { color: var(--blue); }
.tabs .t-ctl { margin-right: 33px; }
.tabs .last-ctl { margin-right: 0; }
```

FILE: chart.js
```js
const SVG = "http://www.w3.org/2000/svg";
const LEFT = 88, TOP = 66, WIDTH = 1558, PANE = 448, SECOND_TOP = 516, SECOND = 162;
const barX = (i) => 92.6 + 10.54 * i;

function add(parent, name, attrs) {
  const node = document.createElementNS(SVG, name);
  for (const key in attrs) node.setAttribute(key, attrs[key]);
  parent.appendChild(node);
}

/* Grid and axis labels */
const times = [["Lug", 166], ["Ott", 303], ["2023", 440], ["Apr", 577], ["Lug", 714], ["Ott", 851], ["2024", 989], ["Apr", 1126], ["Lug", 1263], ["Ott", 1411], ["2025", 1548]];
const prices = [["", 98], ["34.000,00", 146], ["32.000,00", 194], ["30.000,00", 242], ["28.000,00", 290], ["26.000,00", 337], ["24.000,00", 385], ["22.000,00", 433], ["20.000,00", 481]];
const levels = [["100,00", 522], ["50,00", 616]];

const grid = document.getElementById("grid");
const timeAxis = document.getElementById("time-axis");
for (const [label, x] of times) {
  add(grid, "path", { class: "grid-line", d: `M${x + 0.5} ${TOP}V678` });
  const span = document.createElement("span");
  span.textContent = label;
  span.style.left = ((x - LEFT) / WIDTH * 100).toFixed(2) + "%";
  if (label.startsWith("20")) span.className = "year";
  timeAxis.appendChild(span);
}

function tick(axis, label, share, extra) {
  const span = document.createElement("span");
  span.className = "tick" + (extra || "");
  span.textContent = label;
  span.style.top = (share * 100).toFixed(2) + "%";
  axis.appendChild(span);
}
const priceAxis = document.getElementById("axis-price");
const rsiAxis = document.getElementById("axis-rsi");
for (const [label, y] of prices) {
  add(grid, "path", { class: "grid-line", d: `M${LEFT} ${y + 0.5}h${WIDTH}` });
  if (label) tick(priceAxis, label, (y - 2 - TOP) / PANE);
}
for (const [label, y] of levels) {
  add(grid, "path", { class: "grid-line", d: `M${LEFT} ${y + 0.5}h${WIDTH}` });
  tick(rsiAxis, label, (y - 1 - SECOND_TOP) / SECOND);
}
tick(priceAxis, "33.212,82", (165 - TOP) / PANE, " now");

/* Weekly bars: high, body top, body bottom, low; r = down week, t = up week */
const bars = `372 383 387 392 t|369 370 385 391 t|365 367 382 383 r|370 377 421 421 r|419 431 439 442 r|426 430 438 446 t|425 428 450 456 r|437 439 446 464 t|439 446 460 471 r|437 452 460 464 t
421 423 454 454 t|412 419 422 429 t|409 410 417 425 t|406 407 421 421 r|419 425 437 437 r|428 435 442 452 t|429 431 447 452 t|412 428 431 436 r|424 432 456 456 r|445 458 466 477 r
441 459 471 472 t|450 459 464 477 t|437 443 459 461 t|418 420 440 443 t|400 402 420 422 t|369 374 406 406 t|367 369 372 381 t|366 368 374 378 t|365 370 373 379 t|369 371 380 387 r
364 381 394 397 r|381 388 392 401 t|383 384 393 394 t|357 357 389 389 t|341 343 357 357 t|334 340 344 347 r|326 327 343 347 t|310 315 329 332 t|300 307 319 321 t|293 296 306 307 t
293 293 315 317 r|293 294 309 313 t|288 291 308 314 r|309 309 351 354 r|321 340 356 367 t|309 311 332 337 t|305 308 309 319 t|291 293 304 305 t|287 291 297 302 r|299 304 313 321 r
305 305 311 326 t|302 305 306 316 r|297 301 304 315 t|302 307 321 333 r|311 312 317 336 t|304 310 312 321 t|290 293 308 308 t|292 296 310 312 r|282 284 309 317 t|276 281 296 304 r
269 274 297 299 t|268 269 278 278 t|251 254 274 274 t|248 253 277 278 r|273 276 284 295 r|278 284 296 300 r|277 285 294 294 t|263 274 280 280 t|268 270 285 293 r|263 268 280 284 t
259 269 277 278 r|273 277 285 294 r|282 284 295 310 r|272 284 297 302 t|277 282 306 306 r|297 303 308 312 r|272 273 305 305 t|271 271 279 285 r|252 254 276 276 t|252 255 256 264 r
243 243 256 261 t|231 232 245 246 t|226 232 234 238 r|231 233 236 238 t|229 232 234 234 r|221 229 232 241 r|224 230 234 237 t|229 229 236 244 r|231 232 233 243 r|220 225 234 240 t
213 214 224 224 t|195 200 211 216 t|177 177 203 204 t|170 172 178 182 t|158 160 173 174 t|147 148 167 167 t|132 138 147 149 t|126 128 138 138 t|124 126 147 151 r|138 145 153 158 r
139 147 149 163 r|133 140 154 160 t|136 137 156 157 r|128 130 152 152 t|110 113 131 131 t|119 121 135 145 r|125 134 135 146 r|123 127 131 142 r|131 136 179 183 r|152 163 173 179 t
149 161 167 169 r|137 146 153 164 t|131 132 148 151 t|128 134 143 145 r|125 139 152 158 r|145 146 194 196 r|192 199 208 226 t|167 169 198 199 r|154 154 170 170 t|135 137 156 157 t
136 137 164 164 r|152 156 161 170 t|146 152 161 161 t|128 129 153 158 t|131 132 157 167 r|139 139 154 159 t|117 117 137 138 t|116 118 129 134 r|116 123 131 144 r|123 130 151 156 r
135 141 145 159 t|149 149 166 175 r`.split(/[|\n]/);
const belowAverage = (i) => i < 24 || i === 75 || (i > 114 && i < 118) || i === 131;

const candles = document.getElementById("candles");
bars.forEach((bar, i) => {
  const [high, top, bottom, low, dir] = bar.split(" ");
  const x = Math.floor(barX(i));
  add(candles, "rect", { x, y: high, width: 1, height: low - high, fill: dir === "t" ? "#089981" : "#f23645" });
  add(candles, "rect", { x: x - 3, y: top, width: 7, height: bottom - top, fill: belowAverage(i) ? "#ff0000" : "#00ff00" });
});

/* Oscillator, in thirds of a unit below y = 500 */
const rsi = [390, 366, 386, 400, 415, 430, 452, 433, 425, 408, 388, 381, 366, 381, 400, 399, 391, 391, 415, 430, 440, 420, 388, 345, 315, 277, 272, 271, 276, 294, 325, 317, 326, 271, 255, 255, 238, 225, 217, 206, 252, 231, 261, 338, 324, 290, 287, 270, 276, 303, 296, 296, 291, 329, 316, 312, 288, 319, 286, 305, 278, 273, 256, 299, 312, 333, 318, 303, 322, 299, 314, 328, 348, 330, 366, 369, 315, 322, 290, 293, 278, 264, 265, 266, 267, 264, 262, 276, 271, 256, 240, 220, 194, 188, 178, 168, 160, 153, 211, 230, 225, 216, 261, 230, 210, 265, 265, 260, 355, 331, 337, 307, 290, 308, 325, 387, 393, 348, 328, 308, 345, 337, 330, 302, 342, 320, 297, 312, 315, 346, 334, 367];
const rising = [[1, 1], [10, 17], [22, 42], [47, 48], [56, 56], [58, 58], [60, 62], [69, 69], [76, 97], [104, 104], [119, 119], [123, 123], [125, 128]];
const paths = { up: "", dn: "" };
for (let i = 1; i < rsi.length; i++) {
  const side = rising.some(([a, b]) => i >= a && i <= b) ? "up" : "dn";
  paths[side] += `M${barX(i - 1).toFixed(1)} ${(500 + rsi[i - 1] / 3).toFixed(1)}L${barX(i).toFixed(1)} ${(500 + rsi[i] / 3).toFixed(1)}`;
}
const rsiGroup = document.getElementById("rsi");
add(rsiGroup, "path", { class: "rsi-dn", d: paths.dn });
add(rsiGroup, "path", { class: "rsi-up", d: paths.up });
```
